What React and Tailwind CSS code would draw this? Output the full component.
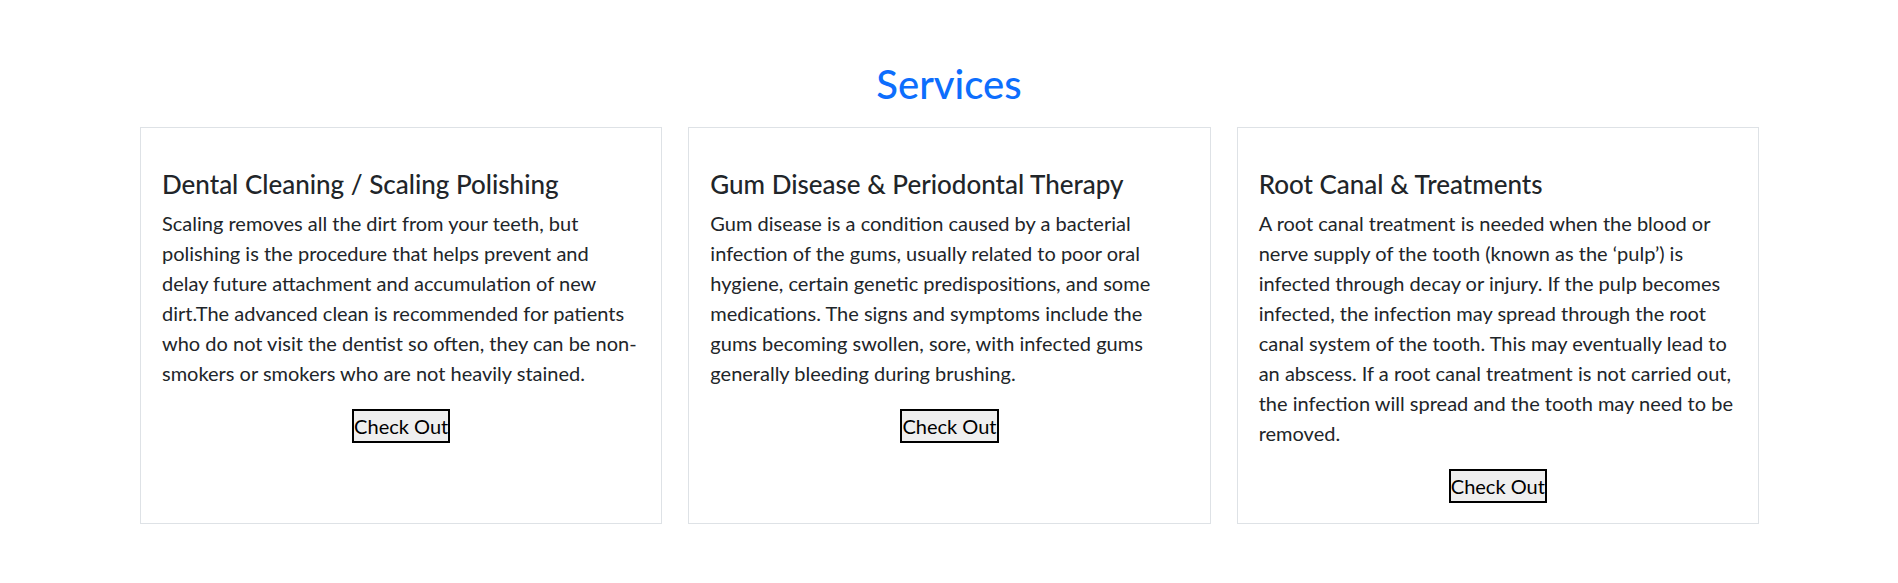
import React from "react";

const services = [
  {
    title: "Dental Cleaning / Scaling Polishing",
    lines: [
      "Scaling removes all the dirt from your teeth, but",
      "polishing is the procedure that helps prevent and",
      "delay future attachment and accumulation of new",
      "dirt.The advanced clean is recommended for patients",
      "who do not visit the dentist so often, they can be non-",
      "smokers or smokers who are not heavily stained.",
    ],
  },
  {
    title: "Gum Disease & Periodontal Therapy",
    lines: [
      "Gum disease is a condition caused by a bacterial",
      "infection of the gums, usually related to poor oral",
      "hygiene, certain genetic predispositions, and some",
      "medications. The signs and symptoms include the",
      "gums becoming swollen, sore, with infected gums",
      "generally bleeding during brushing.",
    ],
  },
  {
    title: "Root Canal & Treatments",
    lines: [
      "A root canal treatment is needed when the blood or",
      "nerve supply of the tooth (known as the \u2018pulp\u2019) is",
      "infected through decay or injury. If the pulp becomes",
      "infected, the infection may spread through the root",
      "canal system of the tooth. This may eventually lead to",
      "an abscess. If a root canal treatment is not carried out,",
      "the infection will spread and the tooth may need to be",
      "removed.",
    ],
  },
];

export default function App() {
  return (
    <div className="w-full min-h-[583px] bg-white font-['Lato',sans-serif] text-[#212529]">
      <h1 className="pt-[60px] mb-[19px] text-center text-[40px] leading-[48px] font-medium text-[#0d6efd]">
        Services
      </h1>
      <div className="grid grid-cols-3 gap-[26px] pl-[140px] pr-[139px]">
        {services.map((s) => (
          <div
            key={s.title}
            className="flex flex-col border border-[#dee2e6] px-[21px] pt-[41px] pb-[20px]"
          >
            <h4 className="text-[26px] leading-[31px] font-medium text-[#212529] whitespace-nowrap">
              {s.title}
            </h4>
            <p className="mt-[8px] text-[20px] leading-[30px] text-[#212529]">
              {s.lines.map((l, i) => (
                <span key={i} className="block whitespace-nowrap">
                  {l}
                </span>
              ))}
            </p>
            <div className="mt-[21px] flex justify-center">
              <button className="border-2 border-black bg-[#efefef] px-0 text-[20px] leading-[30px] text-black">
                Check Out
              </button>
            </div>
          </div>
        ))}
      </div>
    </div>
  );
}
